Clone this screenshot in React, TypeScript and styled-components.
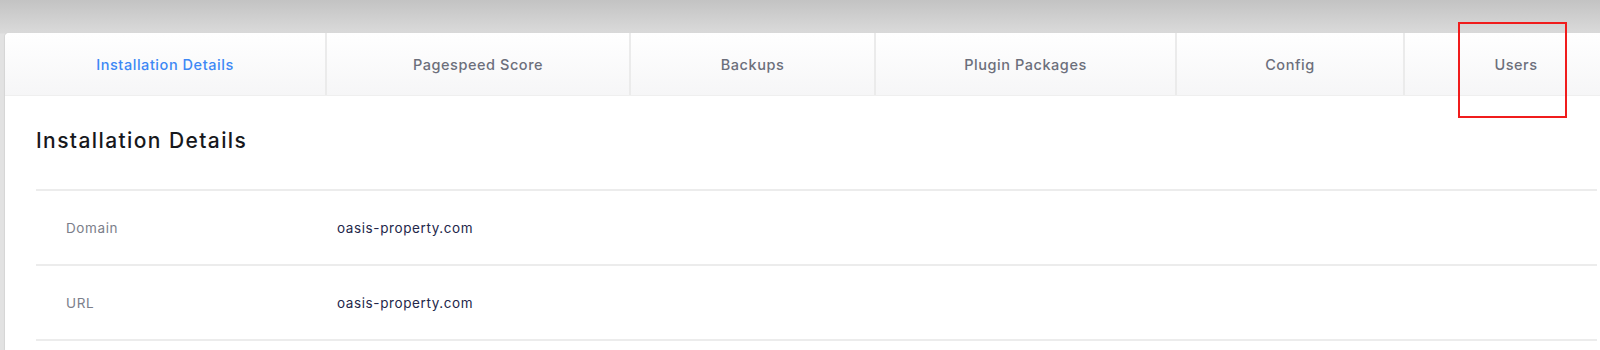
import React from "react";
import styled, { createGlobalStyle } from "styled-components";

const GlobalStyle = createGlobalStyle`
  html, body {
    margin: 0;
    padding: 0;
    overflow: hidden;
  }
  body {
    background: linear-gradient(#c3c3c3 0px, #dadada 33px, #e2e2e2 34px, #e2e2e2 100%);
    font-family: "Inter", "Liberation Sans", sans-serif;
    -webkit-font-smoothing: antialiased;
  }
`;

const Page = styled.div`
  position: relative;
  height: 350px;
  padding: 33px 0 0 5px;
  box-sizing: border-box;
`;

const Card = styled.div`
  width: 1622px;
  height: 100%;
  background-color: #ffffff;
  border-radius: 4px 4px 0 0;
  box-shadow: -1px 0 1px rgba(0, 0, 0, 0.06);
  overflow: hidden;
`;

const TabBar = styled.div`
  display: flex;
  height: 62px;
  background: linear-gradient(#ffffff, #f6f6f7);
  border-bottom: 1px solid #efefef;
  border-radius: 4px 4px 0 0;
`;

const Tab = styled.div<{ $active?: boolean; $width: number }>`
  display: flex;
  flex: 0 0 ${(p) => p.$width}px;
  box-sizing: border-box;
  align-items: center;
  justify-content: center;
  white-space: nowrap;
  font-size: 14.5px;
  font-weight: 500;
  letter-spacing: 0.55px;
  color: ${(p) => (p.$active ? "#3d88f5" : "#6c6f7b")};
  border-right: 2px solid #ebebeb;

  &:last-child {
    border-right: none;
  }
`;

const Content = styled.div`
  padding: 30px 30px 0 31px;
`;

const Heading = styled.h1`
  margin: 0 0 33px;
  font-size: 21px;
  line-height: 30px;
  font-weight: 500;
  letter-spacing: 1.4px;
  color: #17181c;
`;

const Table = styled.div`
  border-top: 2px solid #ececec;
`;

const Row = styled.div`
  display: grid;
  grid-template-columns: 271px 1fr;
  align-items: center;
  height: 73px;
  padding-left: 30px;
  border-bottom: 2px solid #ececec;
  font-size: 13.5px;
  letter-spacing: 0.6px;
`;

const Label = styled.span`
  color: #7b7e8a;
`;

const Value = styled.span`
  color: #24274a;
`;

const Highlight = styled.div`
  position: absolute;
  left: 1458px;
  top: 22px;
  width: 105px;
  height: 92px;
  border: 2px solid #f01c1c;
`;

const tabs = [
  { label: "Installation Details", width: 322 },
  { label: "Pagespeed Score", width: 304 },
  { label: "Backups", width: 245 },
  { label: "Plugin Packages", width: 301 },
  { label: "Config", width: 228 },
  { label: "Users", width: 222 },
];

const rows = [
  { label: "Domain", value: "oasis-property.com" },
  { label: "URL", value: "oasis-property.com" },
];

const App: React.FC = () => {
  return (
    <>
      <GlobalStyle />
      <Page>
        <Card>
          <TabBar>
            {tabs.map((t, i) => (
              <Tab key={t.label} $active={i === 0} $width={t.width}>
                {t.label}
              </Tab>
            ))}
          </TabBar>
          <Content>
            <Heading>Installation Details</Heading>
            <Table>
              {rows.map((r) => (
                <Row key={r.label}>
                  <Label>{r.label}</Label>
                  <Value>{r.value}</Value>
                </Row>
              ))}
            </Table>
          </Content>
        </Card>
        <Highlight />
      </Page>
    </>
  );
};

export default App;
